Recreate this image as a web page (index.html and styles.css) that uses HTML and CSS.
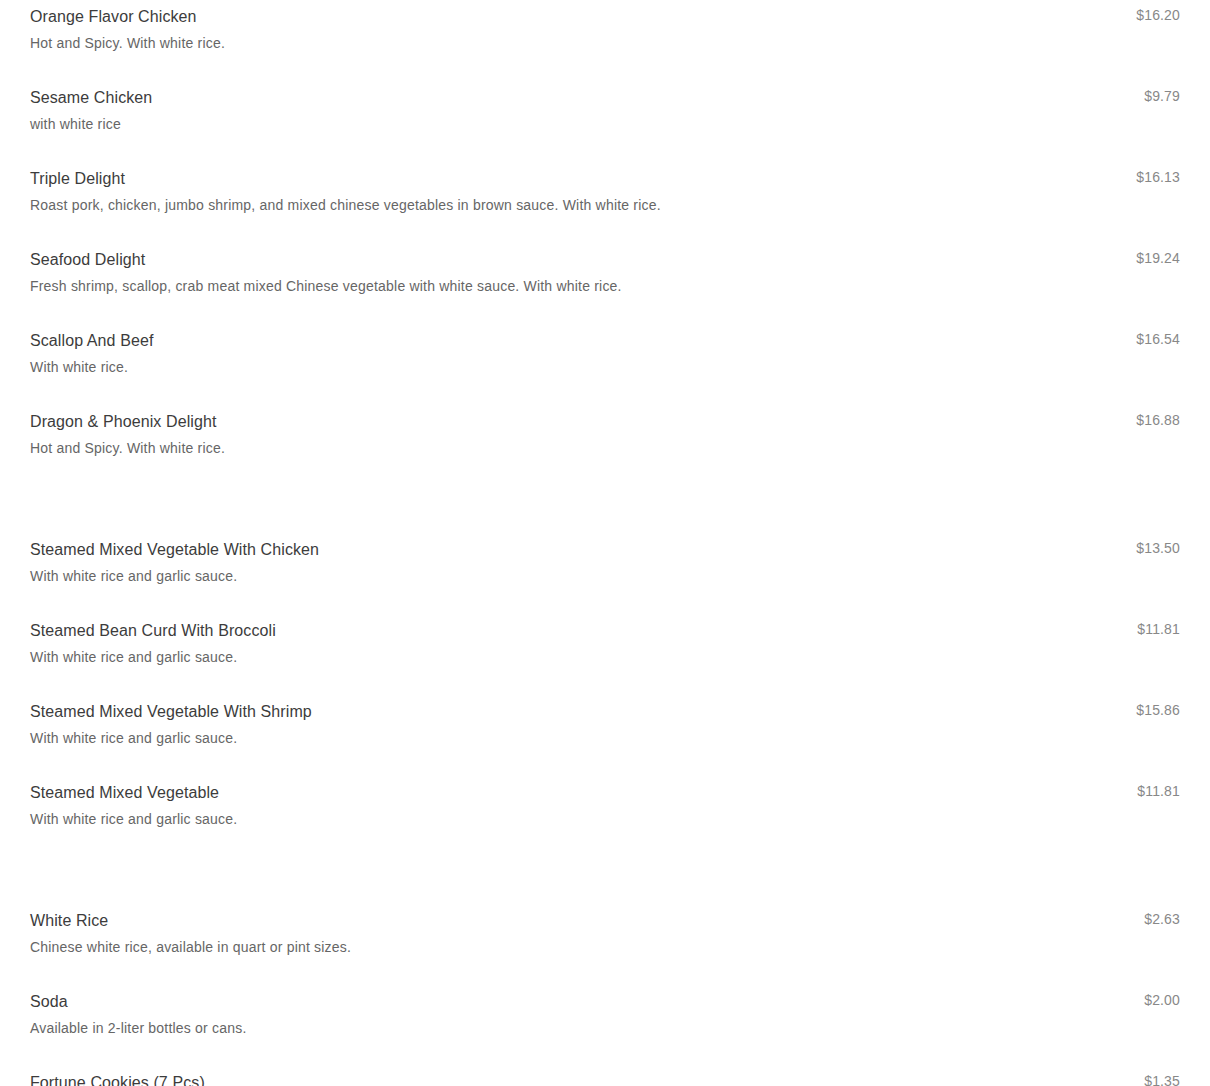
FILE: index.html
```html
<!DOCTYPE html>
<html lang="en">
<head>
    <meta charset="UTF-8">
    <meta name="viewport" content="width=device-width, initial-scale=1.0">
    <title>Menu</title>
    <link rel="stylesheet" href="styles.css">
</head>
<body>
    <div class="menu">
        <section class="menu-section">
            <div class="item">
                <div class="item-info">
                    <div class="item-name">Orange Flavor Chicken</div>
                    <div class="item-desc">Hot and Spicy. With white rice.</div>
                </div>
                <div class="item-price">$16.20</div>
            </div>
            <div class="item">
                <div class="item-info">
                    <div class="item-name">Sesame Chicken</div>
                    <div class="item-desc">with white rice</div>
                </div>
                <div class="item-price">$9.79</div>
            </div>
            <div class="item">
                <div class="item-info">
                    <div class="item-name">Triple Delight</div>
                    <div class="item-desc">Roast pork, chicken, jumbo shrimp, and mixed chinese vegetables in brown sauce. With white rice.</div>
                </div>
                <div class="item-price">$16.13</div>
            </div>
            <div class="item">
                <div class="item-info">
                    <div class="item-name">Seafood Delight</div>
                    <div class="item-desc">Fresh shrimp, scallop, crab meat mixed Chinese vegetable with white sauce. With white rice.</div>
                </div>
                <div class="item-price">$19.24</div>
            </div>
            <div class="item">
                <div class="item-info">
                    <div class="item-name">Scallop And Beef</div>
                    <div class="item-desc">With white rice.</div>
                </div>
                <div class="item-price">$16.54</div>
            </div>
            <div class="item">
                <div class="item-info">
                    <div class="item-name">Dragon &amp; Phoenix Delight</div>
                    <div class="item-desc">Hot and Spicy. With white rice.</div>
                </div>
                <div class="item-price">$16.88</div>
            </div>
        </section>

        <section class="menu-section">
            <div class="item">
                <div class="item-info">
                    <div class="item-name">Steamed Mixed Vegetable With Chicken</div>
                    <div class="item-desc">With white rice and garlic sauce.</div>
                </div>
                <div class="item-price">$13.50</div>
            </div>
            <div class="item">
                <div class="item-info">
                    <div class="item-name">Steamed Bean Curd With Broccoli</div>
                    <div class="item-desc">With white rice and garlic sauce.</div>
                </div>
                <div class="item-price">$11.81</div>
            </div>
            <div class="item">
                <div class="item-info">
                    <div class="item-name">Steamed Mixed Vegetable With Shrimp</div>
                    <div class="item-desc">With white rice and garlic sauce.</div>
                </div>
                <div class="item-price">$15.86</div>
            </div>
            <div class="item">
                <div class="item-info">
                    <div class="item-name">Steamed Mixed Vegetable</div>
                    <div class="item-desc">With white rice and garlic sauce.</div>
                </div>
                <div class="item-price">$11.81</div>
            </div>
        </section>

        <section class="menu-section">
            <div class="item">
                <div class="item-info">
                    <div class="item-name">White Rice</div>
                    <div class="item-desc">Chinese white rice, available in quart or pint sizes.</div>
                </div>
                <div class="item-price">$2.63</div>
            </div>
            <div class="item">
                <div class="item-info">
                    <div class="item-name">Soda</div>
                    <div class="item-desc">Available in 2-liter bottles or cans.</div>
                </div>
                <div class="item-price">$2.00</div>
            </div>
            <div class="item">
                <div class="item-info">
                    <div class="item-name">Fortune Cookies (7 Pcs)</div>
                    <div class="item-desc">Seven fortune cookies.</div>
                </div>
                <div class="item-price">$1.35</div>
            </div>
        </section>
    </div>
</body>
</html>
```

FILE: styles.css
```css
body {
    font-family: "Liberation Sans", sans-serif;
    margin: 0;
    padding: 0;
    background-color: #fff;
    color: #3c3c3c;
}

.menu {
    display: flex;
    flex-direction: column;
    gap: 79px;
    padding: 5px 30px 0;
}

.menu-section {
    display: flex;
    flex-direction: column;
    gap: 32px;
}

.item {
    display: flex;
    justify-content: space-between;
    align-items: flex-start;
}

.item-name {
    padding-top: 1px;
    font-size: 16px;
    line-height: 22px;
    letter-spacing: 0.1px;
    color: #3c3c3c;
}

.item-desc {
    margin-top: 4px;
    font-size: 14px;
    line-height: 22px;
    letter-spacing: 0.2px;
    color: #666;
}

.item-price {
    font-size: 14px;
    line-height: 20px;
    letter-spacing: 0.15px;
    color: #888;
}
```
